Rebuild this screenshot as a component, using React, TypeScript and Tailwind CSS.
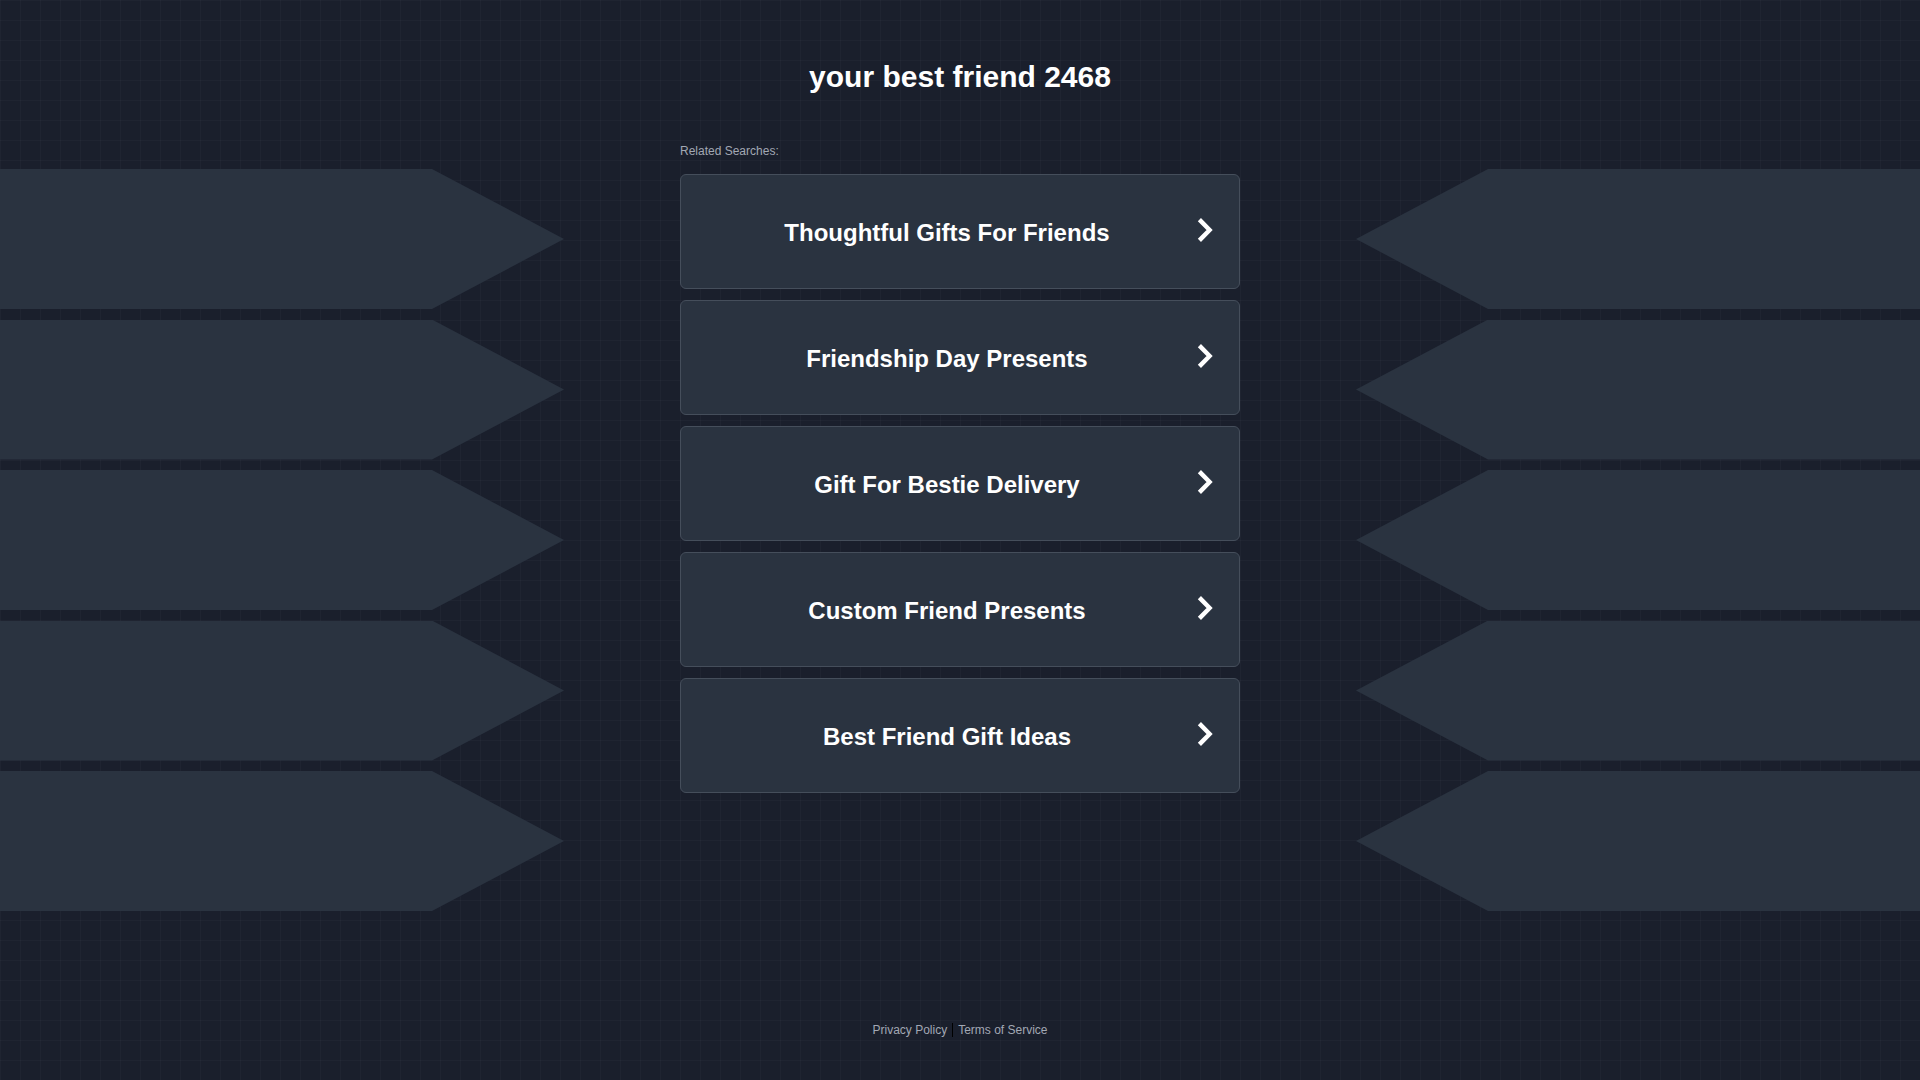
const searches = [
  'Thoughtful Gifts For Friends',
  'Friendship Day Presents',
  'Gift For Bestie Delivery',
  'Custom Friend Presents',
  'Best Friend Gift Ideas',
];

const arrows = [0, 1, 2, 3, 4];

function Chevron() {
  return (
    <svg viewBox="0 0 16 26" className="mb-1 ml-1 h-[26px] w-4 shrink-0" fill="none">
      <polyline
        points="2.4,2.6 12.6,13 2.4,23.4"
        stroke="#ffffff"
        strokeWidth="4.4"
        strokeLinejoin="miter"
        strokeLinecap="butt"
      />
    </svg>
  );
}

function SearchLink({ label }: { label: string }) {
  return (
    <a
      href="#"
      className="flex h-[115px] items-center rounded-[6px] border border-[#454e5b] bg-[#2a3340] pl-5 pr-[26px] no-underline"
    >
      <span className="flex-1 pt-[2px] text-center text-[24px] font-bold leading-[28px] text-white">{label}</span>
      <Chevron />
    </a>
  );
}

export default function App() {
  return (
    <div
      className="flex min-h-screen w-full flex-col bg-[#1a1f2c] bg-[linear-gradient(to_right,rgba(255,255,255,0.022)_1px,transparent_1px),linear-gradient(to_bottom,rgba(255,255,255,0.022)_1px,transparent_1px)] bg-[size:20px_20px] font-['Liberation_Sans',Arial,sans-serif]"
    >
      <div className="flex w-full justify-between">
        {/* left arrow stack */}
        <div className="flex w-[564px] flex-col gap-[10.5px] pt-[169px]">
          {arrows.map((i) => (
            <div
              key={i}
              className="h-[140px] w-full bg-[#2a3340] [clip-path:polygon(0_0,432px_0,100%_50%,432px_100%,0_100%)]"
            />
          ))}
        </div>

        <main className="flex w-[560px] flex-col pt-[59px]">
          <h1 className="text-center text-[30px] font-bold leading-[36px] text-white">your best friend 2468</h1>
          <p className="mt-12 text-[12px] leading-4 text-[#a2a8b4]">Related Searches:</p>
          <div className="mt-[15px] flex flex-col gap-[11px]">
            {searches.map((s) => (
              <SearchLink key={s} label={s} />
            ))}
          </div>
        </main>

        {/* right arrow stack */}
        <div className="flex w-[564px] flex-col gap-[10.5px] pt-[169px]">
          {arrows.map((i) => (
            <div
              key={i}
              className="h-[140px] w-full bg-[#2a3340] [clip-path:polygon(132px_0,100%_0,100%_100%,132px_100%,0_50%)]"
            />
          ))}
        </div>
      </div>

      <footer className="mt-auto flex items-center justify-center pb-[42px] text-[12px] leading-4 text-[#a2a8b4]">
        <a href="#">Privacy Policy</a>
        <span className="mx-[5px] h-[14px] w-px bg-black" />
        <a href="#">Terms of Service</a>
      </footer>
    </div>
  );
}
